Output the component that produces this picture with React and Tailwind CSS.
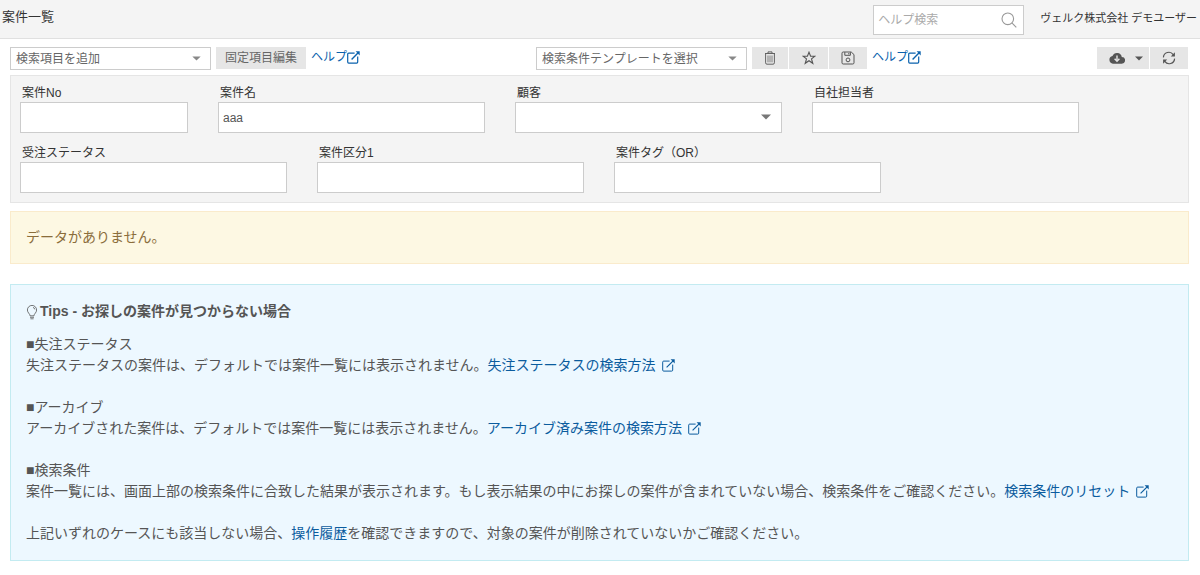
import { useState } from 'react';

const FIELDS = [
  { id: 'no', label: '案件No', width: 'w-[168px]' },
  { id: 'name', label: '案件名', width: 'w-[267px]', value: 'aaa' },
  { id: 'customer', label: '顧客', width: 'w-[267px]', type: 'select' },
  { id: 'staff', label: '自社担当者', width: 'w-[267px]' },
  { id: 'status', label: '受注ステータス', width: 'w-[267px]' },
  { id: 'category', label: '案件区分1', width: 'w-[267px]' },
  { id: 'tag', label: '案件タグ（OR）', width: 'w-[267px]' },
];

function Caret({ className }) {
  return (
    <svg viewBox="0 0 10 6" className={className} fill="currentColor" aria-hidden="true">
      <path d="M0 0.5h10L5 5.5z" />
    </svg>
  );
}

function ExternalIcon({ className, strokeWidth = 1.2 }) {
  return (
    <svg
      viewBox="0 0 13 13"
      className={className}
      fill="none"
      stroke="currentColor"
      strokeWidth={strokeWidth}
      aria-hidden="true"
    >
      <path d="M7.6 2.1H1.7a1 1 0 0 0-1 1v8a1 1 0 0 0 1 1h8a1 1 0 0 0 1-1V5.6" />
      <path d="M4.6 8.4L11.4 1.6" strokeWidth={strokeWidth + 0.2} />
      <path d="M8.6 0.3h4.1v4.1z" fill="currentColor" stroke="none" />
    </svg>
  );
}

function TrashIcon() {
  return (
    <svg viewBox="0 0 12 14" className="h-[14px] w-3" fill="none" stroke="currentColor" strokeWidth="0.9" aria-hidden="true">
      <path d="M1 2.5h10M4 2.3V0.9h4v1.4M1.6 2.7v9.1a1.4 1.4 0 0 0 1.4 1.4h6a1.4 1.4 0 0 0 1.4-1.4V2.7" />
      <path d="M4 4.5v6.8M6 4.5v6.8M8 4.5v6.8" strokeWidth="0.7" />
    </svg>
  );
}

function StarIcon() {
  return (
    <svg viewBox="0 0 14 14" className="size-[14px]" fill="none" stroke="currentColor" strokeWidth="1.1" aria-hidden="true">
      <path d="M7 1.2l1.6 4h4.3L9.5 7.9l1.3 4.4L7 9.7l-3.8 2.6 1.3-4.4L1.1 5.2h4.3z" />
    </svg>
  );
}

function SaveIcon() {
  return (
    <svg viewBox="0 0 14 14" className="size-[14px]" fill="none" stroke="currentColor" aria-hidden="true">
      <path d="M2.2 1h8L13 3.6v8.2a1.2 1.2 0 0 1-1.2 1.2H2.2A1.2 1.2 0 0 1 1 11.8V2.2A1.2 1.2 0 0 1 2.2 1z" />
      <path d="M3.8 1.2v3.1h5.6V1.2M7.8 2v1.4" />
      <circle cx="7" cy="8.9" r="1.9" />
    </svg>
  );
}

function CloudIcon() {
  return (
    <svg viewBox="0 0 16 12" className="h-3 w-4" aria-hidden="true">
      <path
        fill="currentColor"
        d="M12.8 4.9A4.9 4.9 0 0 0 3.5 4 3.9 3.9 0 0 0 4 11.7h8.6a3.4 3.4 0 0 0 .2-6.8z"
      />
      <path d="M8 3.6v4.2M5.6 6.8L8 9.3l2.4-2.5" fill="none" stroke="#e6e6e6" strokeWidth="1.4" />
    </svg>
  );
}

function RefreshIcon() {
  return (
    <svg viewBox="0 0 14 14" className="size-[14px]" fill="none" stroke="currentColor" strokeWidth="1.2" aria-hidden="true">
      <path d="M1.4 6.4A5.4 5.4 0 0 1 11.2 3.6M12.6 7.6A5.4 5.4 0 0 1 2.8 10.4" />
      <path d="M12.9 1.2v4.2H8.8zM1.1 12.8V8.6h4.1z" fill="currentColor" stroke="none" />
    </svg>
  );
}

function SearchIcon() {
  return (
    <svg viewBox="0 0 16 16" className="size-4" fill="none" stroke="currentColor" strokeWidth="1.1" aria-hidden="true">
      <circle cx="6.8" cy="6.8" r="5.8" />
      <path d="M10.9 10.9l4.4 4.4" />
    </svg>
  );
}

function BulbIcon() {
  return (
    <svg viewBox="0 0 12 15" className="mt-[2px] h-[15px] w-3" fill="none" stroke="currentColor" strokeWidth="0.8" aria-hidden="true">
      <path d="M4 10.8C4 8.6 1.4 7.8 1.4 5a4.6 4.6 0 0 1 9.2 0c0 2.8-2.6 3.6-2.6 5.8z" />
      <path d="M4 12.3h4M4.4 13.8h3.2M7 2.4a2.4 2.4 0 0 1 1.8 2" />
    </svg>
  );
}

function ToolbarSelect({ label, width }) {
  return (
    <div className={`relative ${width}`}>
      <select
        aria-label={label}
        className="block h-[23px] w-full appearance-none border border-[#ccc] bg-white pr-6 pl-[5px] text-xs text-[#666]"
      >
        <option>{label}</option>
      </select>
      <Caret className="pointer-events-none absolute top-[9px] right-[10px] h-[5px] w-[9px] text-[#888]" />
    </div>
  );
}

function IconButton({ label, className, children }) {
  return (
    <button
      type="button"
      aria-label={label}
      className={`flex h-[22px] items-center justify-center bg-[#e6e6e6] text-[#555] ${className}`}
    >
      {children}
    </button>
  );
}

function HelpLink() {
  return (
    <a href="#help" className="flex h-5 items-center text-xs text-[#0b62ad]">
      ヘルプ
      <ExternalIcon className="size-[13px]" />
    </a>
  );
}

function TipLink({ href, children }) {
  return (
    <a href={href} className="text-[#0b5c9e]">
      {children}
      <ExternalIcon className="ml-[6px] inline-block size-[13px] align-[-2px]" strokeWidth={1} />
    </a>
  );
}

function Field({ field }) {
  const [value, setValue] = useState(field.value || '');
  const inputClass = 'block h-[31px] w-full border border-[#ccc] bg-white px-1 text-xs text-[#555]';

  return (
    <div className={field.width}>
      <label htmlFor={field.id} className="block h-[18px] pl-[2px] text-xs leading-[18px] text-[#333]">
        {field.label}
      </label>
      {field.type === 'select' ? (
        <div className="relative">
          <select id={field.id} className={`${inputClass} appearance-none`}>
            <option></option>
          </select>
          <Caret className="pointer-events-none absolute top-3 right-[11px] h-[6px] w-[10px] text-[#777]" />
        </div>
      ) : (
        <input
          id={field.id}
          type="text"
          value={value}
          onChange={(e) => setValue(e.target.value)}
          className={inputClass}
        />
      )}
    </div>
  );
}

export default function App() {
  return (
    <div className="min-h-screen bg-white font-['Liberation_Sans','Noto_Sans_CJK_JP',sans-serif] text-[#555]">
      <header className="flex h-[39px] items-center justify-between border-b border-[#e0e0e0] bg-[#f4f4f4] pr-[3px] pl-[2px]">
        <h1 className="pb-1 text-[13px] text-[#333]">案件一覧</h1>
        <div className="flex items-center gap-4">
          <form className="relative mt-[2px]" onSubmit={(e) => e.preventDefault()}>
            <input
              type="search"
              aria-label="ヘルプ検索"
              placeholder="ヘルプ検索"
              className="block h-[30px] w-[151px] border border-[#ccc] bg-white pr-7 pl-1 text-xs placeholder:text-[#aaa]"
            />
            <button type="submit" aria-label="検索" className="absolute top-[7px] right-[7px] text-[#999]">
              <SearchIcon />
            </button>
          </form>
          <span className="pb-[2px] text-[11px] text-[#333]">ヴェルク株式会社 デモユーザー</span>
        </div>
      </header>

      <main className="pt-2 pr-[11px] pb-3 pl-[10px]">
        <div className="flex items-start justify-between">
          <div className="flex gap-[5px]">
            <ToolbarSelect label="検索項目を追加" width="w-[201px]" />
            <button type="button" className="h-[22px] bg-[#e6e6e6] px-[9px] text-xs text-[#666]">
              固定項目編集
            </button>
            <HelpLink />
          </div>
          <div className="flex gap-[5px]">
            <ToolbarSelect label="検索条件テンプレートを選択" width="w-[211px]" />
            <div className="flex gap-px">
              <IconButton label="削除" className="w-9">
                <TrashIcon />
              </IconButton>
              <IconButton label="お気に入り" className="w-[39px]">
                <StarIcon />
              </IconButton>
              <IconButton label="保存" className="w-[38px]">
                <SaveIcon />
              </IconButton>
            </div>
            <HelpLink />
          </div>
          <div className="flex gap-px pr-px">
            <IconButton label="ダウンロード" className="w-[52px] gap-[10px] pl-[6px]">
              <CloudIcon />
              <Caret className="h-[5px] w-2" />
            </IconButton>
            <IconButton label="更新" className="w-[38px]">
              <RefreshIcon />
            </IconButton>
          </div>
        </div>

        <section className="mt-[5px] flex flex-wrap gap-x-[30px] gap-y-[11px] border border-[#e5e5e5] bg-[#f4f4f4] px-[9px] pt-2 pb-[9px]">
          {FIELDS.map((field) => (
            <Field key={field.id} field={field} />
          ))}
        </section>

        <p className="mt-2 border border-[#faebcc] bg-[#fdf8e3] px-[15px] py-[15px] text-sm leading-[21px] text-[#8a6d3b]">
          データがありません。
        </p>

        <section className="mt-5 border border-[#c3ebf1] bg-[#edf8ff] p-4 pl-[15px] text-sm leading-[21px]">
          <h2 className="mb-3 flex items-center gap-[2px] font-bold">
            <BulbIcon />
            <span>Tips - お探しの案件が見つからない場合</span>
          </h2>
          <div className="flex flex-col gap-[21px]">
            <p>
              ■失注ステータス
              <br />
              失注ステータスの案件は、デフォルトでは案件一覧には表示されません。
              <TipLink href="#lost">失注ステータスの検索方法</TipLink>
            </p>
            <p>
              ■アーカイブ
              <br />
              アーカイブされた案件は、デフォルトでは案件一覧には表示されません。
              <TipLink href="#archive">アーカイブ済み案件の検索方法</TipLink>
            </p>
            <p>
              ■検索条件
              <br />
              案件一覧には、画面上部の検索条件に合致した結果が表示されます。もし表示結果の中にお探しの案件が含まれていない場合、検索条件をご確認ください。
              <TipLink href="#reset">検索条件のリセット</TipLink>
            </p>
            <p>
              上記いずれのケースにも該当しない場合、
              <a href="#history" className="text-[#0b5c9e]">
                操作履歴
              </a>
              を確認できますので、対象の案件が削除されていないかご確認ください。
            </p>
          </div>
        </section>
      </main>
    </div>
  );
}
